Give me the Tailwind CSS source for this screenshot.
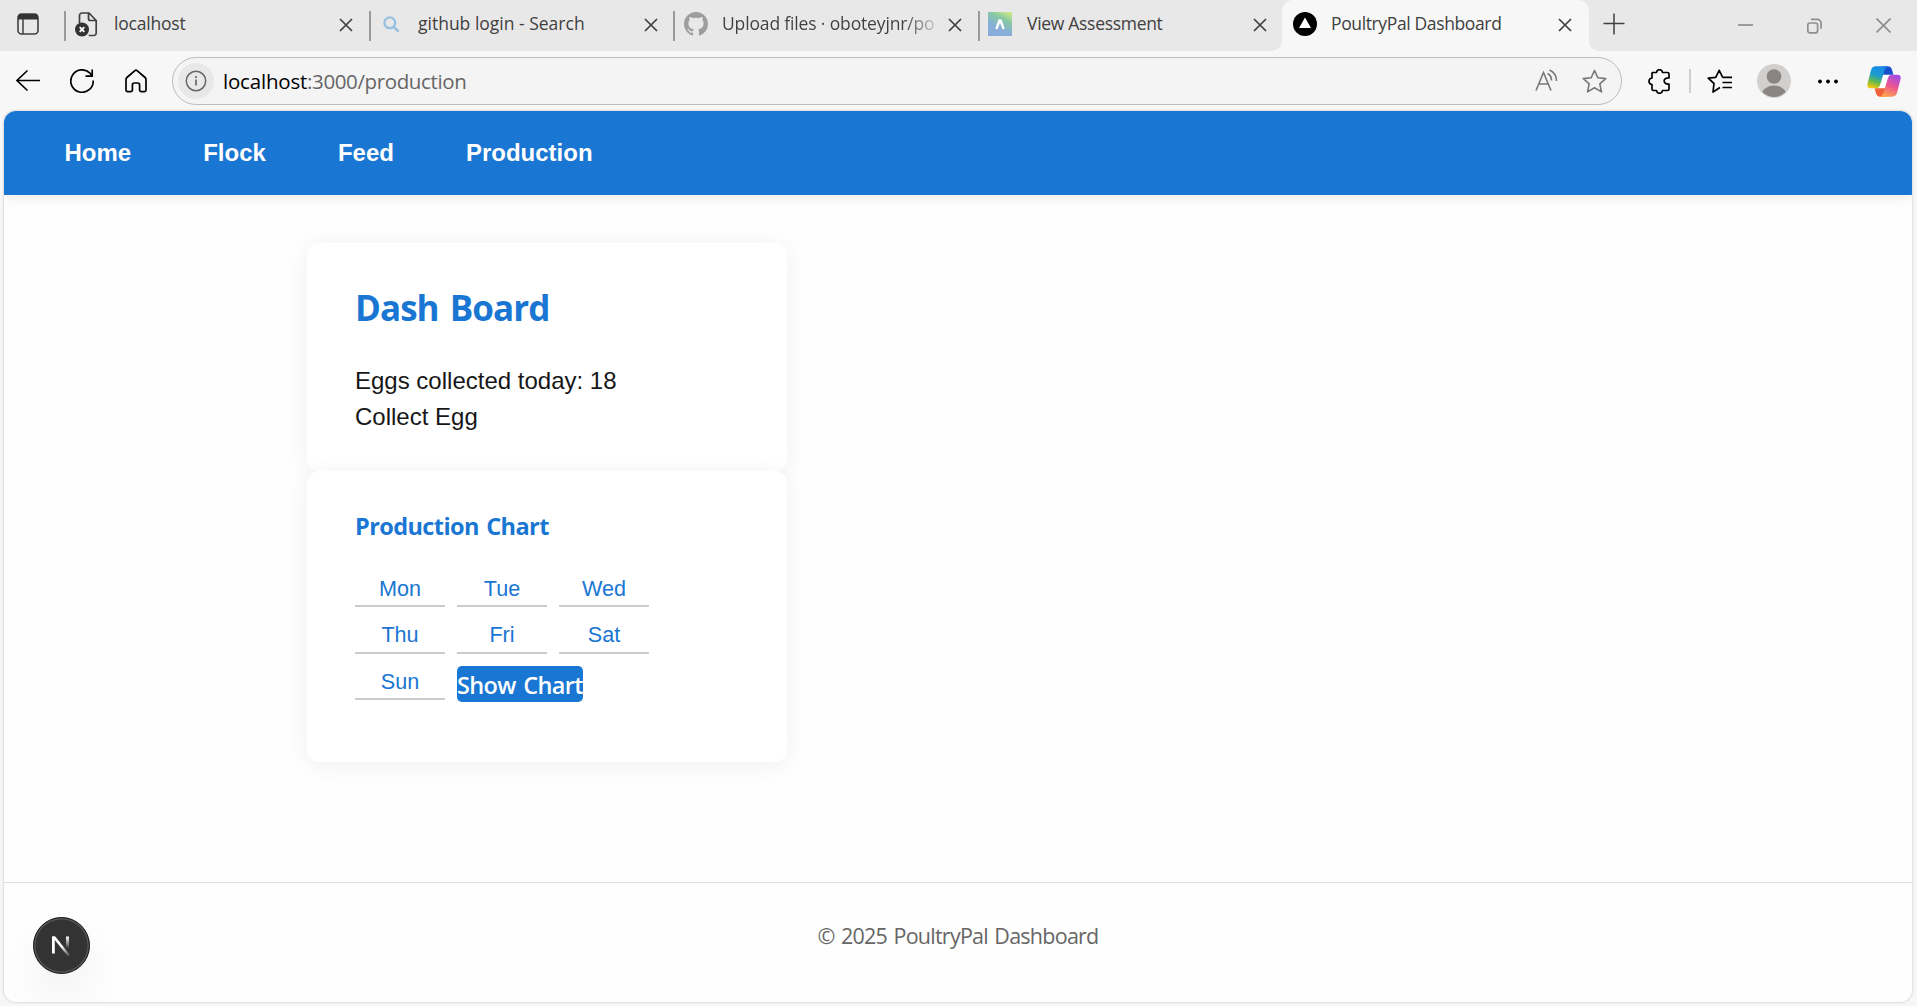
<!DOCTYPE html>
<html lang="en">
<head>
<meta charset="utf-8">
<title>PoultryPal Dashboard</title>
<script src="https://cdn.jsdelivr.net/npm/@tailwindcss/browser@4"></script>
</head>
<body class="flex h-[1006px] w-[1917px] flex-col overflow-hidden bg-[#f7f7f7] font-['Open_Sans',sans-serif]">

<!-- Tab strip -->
<div class="flex h-[51px] shrink-0 bg-[#e8e8e8] text-[17.5px] leading-[47px] text-[#404040]">
  <div class="w-[64px] shrink-0 pt-[13px] pl-[17px]">
    <svg class="h-[22px] w-[22px]" viewBox="0 0 22 22"><rect x="1" y="1" width="20" height="20" rx="3.5" fill="none" stroke="#404040" stroke-width="1.6"/><path d="M1 6.5V4a3 3 0 0 1 3-3h14a3 3 0 0 1 3 3v2.500z" fill="#333"/><path d="M6 6v15" stroke="#404040" stroke-width="1.5"/></svg>
  </div>

  <div class="flex w-[305px] shrink-0">
    <div class="mt-[11px] h-[30px] w-[2px] bg-[#999]"></div>
    <div class="w-[48px] shrink-0 pt-[12px] pl-[9px]">
      <svg class="h-[25px] w-[23px]" viewBox="0 0 23 25"><path d="M4.500 11V3.500a2.500 2.500 0 0 1 2.500-2.500h7l7.200 7.500V21a2.500 2.500 0 0 1-2.500 2.500h-5M13.500 1v5.500a2 2 0 0 0 2 2h5.500" fill="none" stroke="#404040" stroke-width="1.700"/><circle cx="7" cy="17.500" r="7" fill="#333"/><path d="M4.700 15.200l4.600 4.600m0-4.600l-4.600 4.600" stroke="#fff" stroke-width="1.800"/></svg>
    </div>
    <div class="w-[220px] tracking-[-0.2px]">localhost</div>
    <svg class="mt-[18px] h-[14px] w-[14px] shrink-0 ml-[5px]" viewBox="0 0 14 14"><path d="M1 1l12 12M13 1L1 13" stroke="#404040" stroke-width="1.700"/></svg>
  </div>

  <div class="flex w-[304px] shrink-0">
    <div class="mt-[11px] h-[30px] w-[2px] bg-[#999]"></div>
    <div class="w-[47px] shrink-0 pt-[16px] pl-[12px]">
      <svg class="h-[17px] w-[17px]" viewBox="0 0 17 17"><circle cx="6.800" cy="6.800" r="5.400" fill="none" stroke="#96bfe0" stroke-width="2.300"/><path d="M10.800 10.800l4.800 4.800" stroke="#96bfe0" stroke-width="2.500"/></svg>
    </div>
    <div class="w-[220px]">github login - Search</div>
    <svg class="mt-[18px] h-[14px] w-[14px] shrink-0 ml-[6px]" viewBox="0 0 14 14"><path d="M1 1l12 12M13 1L1 13" stroke="#404040" stroke-width="1.700"/></svg>
  </div>

  <div class="flex w-[305px] shrink-0">
    <div class="mt-[11px] h-[30px] w-[2px] bg-[#999]"></div>
    <div class="w-[47px] shrink-0 pt-[12px] pl-[9px]">
      <svg class="h-[24px] w-[24px]" viewBox="0 0 16 16"><path fill="#9b9da0" d="M8 0C3.580 0 0 3.580 0 8c0 3.540 2.290 6.530 5.470 7.590.4.070.550-.170.550-.380 0-.190-.010-.820-.010-1.490-2.010.370-2.530-.490-2.690-.940-.090-.230-.480-.940-.820-1.130-.280-.150-.680-.520-.010-.530.630-.010 1.080.580 1.230.820.720 1.210 1.870.870 2.330.660.070-.520.280-.870.510-1.070-1.780-.200-3.640-.890-3.640-3.950 0-.870.310-1.590.820-2.150-.080-.200-.360-1.020.080-2.120 0 0 .670-.210 2.200.820.640-.180 1.320-.270 2-.270s1.360.090 2 .270c1.530-1.040 2.200-.820 2.200-.820.440 1.100.160 1.920.080 2.120.510.560.820 1.270.820 2.150 0 3.070-1.870 3.750-3.650 3.950.290.250.540.730.540 1.480 0 1.070-.010 1.930-.010 2.200 0 .210.150.460.550.380A8.010 8.010 0 0 0 16 8c0-4.420-3.580-8-8-8z"/></svg>
    </div>
    <div class="w-[213px] overflow-hidden bg-linear-to-r from-[#404040] from-85% to-[#404040]/20 bg-clip-text tracking-[-0.15px] whitespace-nowrap text-transparent">Upload files · oboteyjnr/po</div>
    <svg class="mt-[18px] h-[14px] w-[14px] shrink-0 ml-[13px]" viewBox="0 0 14 14"><path d="M1 1l12 12M13 1L1 13" stroke="#404040" stroke-width="1.700"/></svg>
  </div>

  <div class="flex w-[304px] shrink-0">
    <div class="mt-[11px] h-[30px] w-[2px] bg-[#999]"></div>
    <div class="w-[47px] shrink-0 pt-[12px] pl-[8px]">
      <svg class="h-[24px] w-[24px]" viewBox="0 0 24 24"><defs><linearGradient id="va" x1=".8" y1="0" x2=".3" y2="1"><stop offset="0" stop-color="#c8e68c"/><stop offset=".3" stop-color="#86c8a2"/><stop offset=".7" stop-color="#88addb"/></linearGradient></defs><path fill="url(#va)" d="M0 0h24v24H0z"/><path d="M8.300 17l3.200-8.500h1l3.200 8.500" fill="none" stroke="#fff" stroke-width="2.400"/></svg>
    </div>
    <div class="w-[220px] tracking-[-0.3px]">View Assessment</div>
    <svg class="mt-[18px] h-[14px] w-[14px] shrink-0 ml-[6px]" viewBox="0 0 14 14"><path d="M1 1l12 12M13 1L1 13" stroke="#404040" stroke-width="1.700"/></svg>
  </div>

  <!-- Active tab -->
  <div class="relative flex w-[307px] shrink-0 rounded-t-[11px] bg-[#f7f7f7]">
    <svg class="absolute bottom-0 -left-[10px] h-[10px] w-[10px]" viewBox="0 0 10 10"><path d="M10 0v10H0A10 10 0 0 0 10 0z" fill="#f7f7f7"/></svg>
    <svg class="absolute -right-[10px] bottom-0 h-[10px] w-[10px]" viewBox="0 0 10 10"><path d="M0 0v10h10A10 10 0 0 1 0 0z" fill="#f7f7f7"/></svg>
    <div class="w-[49px] shrink-0 pt-[12px] pl-[11px]">
      <svg class="h-[24px] w-[24px]" viewBox="0 0 24 24"><circle cx="12" cy="12" r="12"/><path d="M12 5.500l6 10.500H6z" fill="#fff"/></svg>
    </div>
    <div class="w-[221px] tracking-[-0.37px]">PoultryPal Dashboard</div>
    <svg class="mt-[18px] ml-[6px] h-[14px] w-[14px] shrink-0" viewBox="0 0 14 14"><path d="M1 1l12 12M13 1L1 13" stroke="#404040" stroke-width="1.700"/></svg>
  </div>

  <svg class="mt-[13px] ml-[14px] h-[22px] w-[22px] shrink-0" viewBox="0 0 22 22"><path d="M11 .5v21M.5 10.500h21" stroke="#404040" stroke-width="1.500"/></svg>
  <div class="ml-auto flex gap-[54px] pt-[18px] pr-[26px]">
    <svg class="h-[16px] w-[15px]" viewBox="0 0 15 16"><path d="M0 7h15" stroke="#8e8e8e" stroke-width="1.700"/></svg>
    <svg class="h-[16px] w-[15px]" viewBox="0 0 15 16"><rect x=".8" y="5" width="9.800" height="9.800" rx="2" fill="none" stroke="#8e8e8e" stroke-width="1.700"/><path d="M4 1.300h6a4 4 0 0 1 4 4v5.500" fill="none" stroke="#8e8e8e" stroke-width="1.700"/></svg>
    <svg class="h-[16px] w-[15px]" viewBox="0 0 15 16"><path d="M.5 .500l14 14m0-14l-14 14" stroke="#8e8e8e" stroke-width="1.700"/></svg>
  </div>
</div>

<!-- Toolbar -->
<div class="flex h-[60px] shrink-0 items-center">
  <svg class="ml-[16px] h-[24px] w-[24px]" viewBox="0 0 24 24"><path d="M24 11.500H1M11.500 1.500L1 11.500l10.500 10" fill="none" stroke="#000" stroke-width="1.600"/></svg>
  <svg class="ml-[30px] h-[24px] w-[24px]" viewBox="0 0 24 24"><path d="M23.200 11.500A11.200 11.200 0 1 1 20 4.200l2 2.500M22.200 .5v6.700h-6.700" fill="none" stroke="#000" stroke-width="1.700"/></svg>
  <svg class="ml-[31px] h-[24px] w-[22px]" viewBox="0 0 22 24"><path d="M1 10.500a2.500 2.500 0 0 1 .9-2L9.600 1.900a2 2 0 0 1 2.800 0l7.700 6.600a2.500 2.500 0 0 1 .9 2V21a1.600 1.600 0 0 1-1.600 1.600h-3.200A1.600 1.600 0 0 1 14.600 21v-5a2 2 0 0 0-2-2H9.400a2 2 0 0 0-2 2v5a1.600 1.600 0 0 1-1.600 1.600H2.600A1.600 1.600 0 0 1 1 21z" fill="none" stroke="#000" stroke-width="1.700"/></svg>
  <div class="ml-[25px] flex h-[48px] w-[1450px] shrink-0 items-center rounded-full border-[1.500px] border-[#bdbdbd] bg-[#f4f4f4]">
    <div class="ml-[5px] flex h-[36px] w-[36px] items-center justify-center rounded-full bg-[#e8e8e8]">
      <svg class="h-[22px] w-[22px]" viewBox="0 0 22 22"><circle cx="11" cy="11" r="9.700" fill="none" stroke="#666" stroke-width="1.500"/><path d="M11 9.500v6M11 6v2" stroke="#666" stroke-width="1.700"/></svg>
    </div>
    <div class="ml-[9px] text-[20.500px] whitespace-nowrap text-[#666]"><span class="tracking-[-0.2px] text-black">localhost</span><span class="tracking-[-0.38px]">:3000/production</span></div>
    <svg class="ml-auto h-[24px] w-[24px]" viewBox="0 0 24 24"><path d="M1 21.500L8.500 3.500 16 21.500M3.700 15h9.600M12.500 4.500c2.600 1.300 4 4 4 7M14.500 1c4.500 2 7 6 7 11" fill="none" stroke="#777" stroke-width="1.600"/></svg>
    <svg class="mr-[14px] ml-[23px] h-[25px] w-[25px]" viewBox="0 0 25 25"><path d="M12.500 1.500l3.300 7.200 7.900.9-5.900 5.300 1.700 8-7-4.200-7 4.200 1.700-8L1.300 9.600l7.900-.9z" fill="none" stroke="#777" stroke-width="1.600" stroke-linejoin="round"/></svg>
  </div>
  <svg class="ml-[26px] h-[25px] w-[22px]" viewBox="0 0 22 25"><path d="M4.500 3.500H8.500C9 -.2 14 -.2 14.500 3.500H19.500a1.500 1.500 0 0 1 1.500 1.500V9C14.500 8.500 14.500 15.500 21 15v5a1.500 1.500 0 0 1-1.500 1.500H14.500C14 25.200 9 25.200 8.500 21.500H5.500a1.500 1.500 0 0 1-1.500-1.500V15.500C0 15 0 9.500 4 9V4.500a1 1 0 0 1 .5-1z" fill="none" stroke="#000" stroke-width="1.700" stroke-linejoin="round"/></svg>
  <div class="ml-[19px] h-[24px] w-[2px] bg-[#cfcfcf]"></div>
  <svg class="ml-[16px] h-[25px] w-[25px]" viewBox="0 0 25 25"><path d="M13 18.500L6 23l1-8.500L1.200 9.200l7.500-.9 3.500-7 3.500 7M15.500 8.300h9.500M15.500 13.500h9.500M15.500 18.500h9.500" fill="none" stroke="#000" stroke-width="1.700" stroke-linejoin="round"/></svg>
  <svg class="ml-[25px] h-[34px] w-[34px]" viewBox="0 0 34 34"><defs><clipPath id="av"><circle cx="17" cy="17" r="16"/></clipPath></defs><circle cx="17" cy="17" r="17" fill="#d2d0ce"/><circle cx="17" cy="12.500" r="7.300" fill="#8a8583"/><ellipse cx="17" cy="33" rx="13" ry="11.500" fill="#8a8583" clip-path="url(#av)"/></svg>
  <svg class="ml-[26px] h-[6px] w-[22px]" viewBox="0 0 22 6"><circle cx="3" cy="3.500" r="1.900"/><circle cx="11" cy="3.500" r="1.900"/><circle cx="19" cy="3.500" r="1.900"/></svg>
  <svg class="ml-[28px] h-[31px] w-[34px]" viewBox="0 0 100 92"><defs>
    <linearGradient id="c1" x1=".6" y1="0" x2=".3" y2="1"><stop offset="0" stop-color="#1688e8"/><stop offset=".4" stop-color="#1c9bd0"/><stop offset=".7" stop-color="#62b84e"/><stop offset="1" stop-color="#f2c80a"/></linearGradient>
    <linearGradient id="c2" x1=".7" y1="0" x2=".3" y2="1"><stop offset="0" stop-color="#a24be8"/><stop offset=".5" stop-color="#ee5590"/><stop offset="1" stop-color="#ffa54c"/></linearGradient></defs>
    <path d="M50 26h20L58 66H34z" fill="#fff"/>
    <path d="M45 1h15c9 0 12 4 14 11l4 14H46z" fill="#1b50cc"/><path d="M55 91H40c-9 0-12-4-14-11l-4-14H54z" fill="#f0603a"/>
    <path d="M26 1H62c-6 2-9 8-11 14L38 57c-2 6-6 9-12 9H11C2 66-1 60 1 53L11 14C13 5 18 1 26 1z" fill="url(#c1)"/>
    <path d="M74 91H38c6-2 9-8 11-14L62 35c2-6 6-9 12-9h15c9 0 12 6 10 13L89 78c-2 9-7 13-15 13z" fill="url(#c2)"/></svg>
</div>

<!-- Page -->
<div class="relative mx-[4px] flex h-[891px] w-[1908px] shrink-0 flex-col overflow-hidden rounded-[12px] bg-[#fefefe] shadow-[0_0_2px_1px_#dcdcdc]">
  <nav class="flex h-[84px] shrink-0 items-center gap-[72px] bg-[#1976d2] pl-[60.5px] font-['Liberation_Sans',Arial,sans-serif] text-[24px] font-bold text-white shadow-[0_3px_12px_rgba(0,0,0,0.07)]">
    <a>Home</a><a>Flock</a><a>Feed</a><a>Production</a>
  </nav>

  <main class="flex-1 pt-[48px] pl-[303px]">
    <section class="h-[228px] w-[480px] rounded-[12px] bg-white px-[48px] pt-[38px] shadow-[0_3px_24px_rgba(0,0,0,0.06)]">
      <h1 class="mb-[28px] text-[35px] leading-[54px] font-bold tracking-[-0.95px] [word-spacing:3px] text-[#1976d2]">Dash Board</h1>
      <div class="font-['Liberation_Sans',Arial,sans-serif] text-[24px] leading-[36px] text-[#171717]">
        <p>Eggs collected today: 18</p>
        <p>Collect Egg</p>
      </div>
    </section>
    <section class="h-[291px] w-[480px] rounded-[12px] bg-white px-[48px] pt-[37px] shadow-[0_3px_24px_rgba(0,0,0,0.06)]">
      <h2 class="mb-[28.500px] text-[23.500px] leading-[36px] font-bold tracking-[-0.6px] [word-spacing:2px] text-[#1976d2]">Production Chart</h2>
      <div class="flex flex-wrap items-start gap-[12px] pr-[60px] font-['Liberation_Sans',Arial,sans-serif] text-[21.600px] leading-[32.500px] text-[#1976d2]">
        <div class="w-[90px] border-b-2 border-[#ccc] text-center">Mon</div>
        <div class="w-[90px] border-b-2 border-[#ccc] text-center">Tue</div>
        <div class="w-[90px] border-b-2 border-[#ccc] text-center">Wed</div>
        <div class="w-[90px] border-b-2 border-[#ccc] text-center">Thu</div>
        <div class="w-[90px] border-b-2 border-[#ccc] text-center">Fri</div>
        <div class="w-[90px] border-b-2 border-[#ccc] text-center">Sat</div>
        <div class="w-[90px] border-b-2 border-[#ccc] text-center">Sun</div>
        <button class="mt-[0.5px] h-[36px] w-[126px] rounded-[5px] bg-[#1976d2] pt-px font-['Open_Sans',sans-serif] text-[23.500px] leading-[36px] font-semibold tracking-[-0.65px] [word-spacing:2px] whitespace-nowrap text-white">Show Chart</button>
      </div>
    </section>
  </main>

  <footer class="h-[120px] shrink-0 border-t border-[#dcdcdc] pt-[35px] text-center text-[21.500px] leading-[36px] tracking-[-0.75px] [word-spacing:1.500px] text-[#666]">© 2025 PoultryPal Dashboard</footer>

  <div class="absolute bottom-[28.500px] left-[28.500px] flex h-[57px] w-[57px] items-center justify-center rounded-full border border-[#171717] bg-[#333] shadow-[inset_0_0_0_1.500px_#555,0_24px_48px_-6px_rgba(0,0,0,0.09)]">
    <svg class="h-[24px] w-[22px]" viewBox="0 0 22 24"><defs><linearGradient id="n1" x1="0" y1="0" x2="0" y2="1"><stop offset="0" stop-color="#fff"/><stop offset="1" stop-color="#fff" stop-opacity="0"/></linearGradient><linearGradient id="n2" gradientUnits="userSpaceOnUse" x1="12" y1="13" x2="19" y2="23"><stop offset="0" stop-color="#fff"/><stop offset="1" stop-color="#fff" stop-opacity=".1"/></linearGradient></defs><path d="M2 3.500h2.800v17H2z" fill="#fff"/><path d="M16 3.500h3v12h-3z" fill="url(#n1)"/><path d="M2 3.500h3.300L20 22l-1.800 1.800z" fill="url(#n2)"/></svg>
  </div>
</div>
</body>
</html>
